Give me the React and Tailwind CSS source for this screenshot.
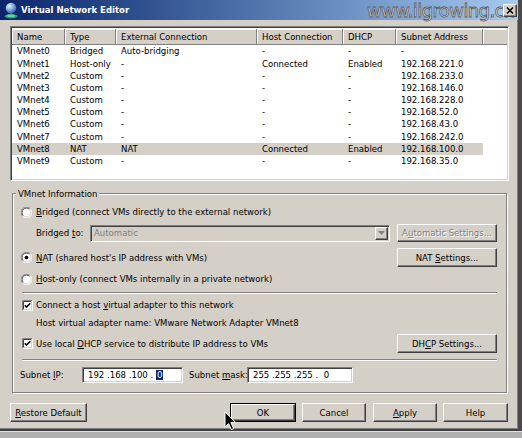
import React from "react";

const U = ({ children }) => <span className="underline underline-offset-[1px]">{children}</span>;

function Radio({ checked }) {
  return (
    <svg width="11" height="11" viewBox="0 0 12 12" className="shrink-0">
      <circle cx="6" cy="6" r="5.5" fill="#fff" />
      <path d="M10.2 1.8 A5.5 5.5 0 0 0 1.8 10.2" stroke="#808080" fill="none" />
      <path d="M9.4 2.6 A4.6 4.6 0 0 0 2.6 9.4" stroke="#404040" fill="none" />
      <path d="M1.8 10.2 A5.5 5.5 0 0 0 10.2 1.8" stroke="#ffffff" fill="none" />
      <path d="M2.6 9.4 A4.6 4.6 0 0 0 9.4 2.6" stroke="#d4d0c8" fill="none" />
      {checked && <circle cx="6" cy="6" r="2" fill="#000" />}
    </svg>
  );
}

function Check() {
  return (
    <svg width="11" height="11" viewBox="0 0 11 11" className="shrink-0">
      <rect x="0" y="0" width="11" height="11" fill="#fff" />
      <path d="M0.5 10.5V0.5H10.5" stroke="#808080" fill="none" />
      <path d="M1.5 9.5V1.5H9.5" stroke="#404040" fill="none" />
      <path d="M0.5 10.5H10.5V0.5" stroke="#ffffff" fill="none" />
      <path d="M1.5 9.5H9.5V1.5" stroke="#d4d0c8" fill="none" />
      <path d="M2.8 5.2 L4.5 7 L8.3 3.2" stroke="#000" strokeWidth="1.6" fill="none" />
    </svg>
  );
}

const raised =
  "border border-t-white border-l-white border-r-[#404040] border-b-[#404040] shadow-[inset_-1px_-1px_0_#808080,inset_1px_1px_0_#d4d0c8]";
const sunken =
  "border border-t-[#808080] border-l-[#808080] border-r-white border-b-white shadow-[inset_1px_1px_0_#404040,inset_-1px_-1px_0_#d4d0c8]";

function Btn({ w, h = 19, children, disabled, def }) {
  const inner = (
    <div
      className={`${raised} h-full w-full flex items-center justify-center bg-[#d4d0c8] ${
        disabled ? "text-[#808080] [text-shadow:1px_1px_0_#fff]" : "text-black"
      }`}
    >
      <span className="whitespace-pre">{children}</span>
    </div>
  );
  return (
    <div className={`shrink-0 ${def ? "border border-black" : ""}`} style={{ width: w, height: h }}>
      {inner}
    </div>
  );
}

const rows = [
  ["VMnet0", "Bridged", "Auto-bridging", "-", "-", "-"],
  ["VMnet1", "Host-only", "-", "Connected", "Enabled", "192.168.221.0"],
  ["VMnet2", "Custom", "-", "-", "-", "192.168.233.0"],
  ["VMnet3", "Custom", "-", "-", "-", "192.168.146.0"],
  ["VMnet4", "Custom", "-", "-", "-", "192.168.228.0"],
  ["VMnet5", "Custom", "-", "-", "-", "192.168.52.0"],
  ["VMnet6", "Custom", "-", "-", "-", "192.168.43.0"],
  ["VMnet7", "Custom", "-", "-", "-", "192.168.242.0"],
  ["VMnet8", "NAT", "NAT", "Connected", "Enabled", "192.168.100.0"],
  ["VMnet9", "Custom", "-", "-", "-", "192.168.35.0"],
];

const headers = ["Name", "Type", "External Connection", "Host Connection", "DHCP", "Subnet Address"];

function TitleIcon() {
  return (
    <svg width="16" height="17" viewBox="0 0 16 17" className="shrink-0">
      <defs>
        <radialGradient id="hg" cx="0.35" cy="0.3" r="0.8">
          <stop offset="0" stopColor="#e8f2ff" />
          <stop offset="0.5" stopColor="#7fa8e0" />
          <stop offset="1" stopColor="#2a4fa8" />
        </radialGradient>
      </defs>
      <rect x="7" y="9" width="2" height="4" fill="#2f6f8f" />
      <ellipse cx="8" cy="14.3" rx="6.5" ry="2.2" fill="#2aa07a" />
      <ellipse cx="8" cy="13.8" rx="4" ry="1.2" fill="#6fd0a8" />
      <circle cx="8" cy="6" r="5.3" fill="url(#hg)" />
    </svg>
  );
}

export default function App() {
  return (
    <div className="w-[522px] h-[438px] bg-[#a8a8a8] overflow-hidden relative font-['Tahoma','DejaVu_Sans_Condensed','Liberation_Sans',sans-serif] text-[9.5px] text-black leading-none">
      <div className="w-[522px] h-[431px] bg-[#d4d0c8] flex flex-col border-r-[4px] border-b-2 border-r-[#4a4a4a] border-b-[#404040] shadow-[inset_-1px_-1px_0_#808080]">
        {/* Title bar */}
        <div className="h-[20px] shrink-0 flex items-center bg-linear-to-r from-[#0a246a] to-[#a6caf0] pl-[3px] pr-[1px]">
          <TitleIcon />
          <span className="ml-[2px] text-white font-bold text-[9.5px]">Virtual Network Editor</span>
          <div className={`relative z-10 ml-auto w-[14px] h-[13px] ${raised} bg-[#d4d0c8] flex items-center justify-center`}>
            <svg width="8" height="7" viewBox="0 0 8 7">
              <path d="M1 0.5 L7 6.5 M7 0.5 L1 6.5" stroke="#000" strokeWidth="1.5" />
            </svg>
          </div>
        </div>

        {/* List view */}
        <div className={`mt-[6px] ml-[10px] w-[499px] h-[155px] shrink-0 bg-white ${sunken} p-[1px] overflow-hidden`}>
          <div className="flex h-[16px] bg-[#d4d0c8] mt-[1px]">
            {headers.map((h, i) => (
              <div
                key={h}
                className="h-full flex items-center pl-[5px] border-r border-b border-r-[#808080] border-b-[#808080] shadow-[inset_1px_1px_0_#fff] shrink-0"
                style={{ width: [53, 51, 141, 86, 53, 87][i] }}
              >
                {h}
              </div>
            ))}
            <div className="flex-1 h-full border-b border-b-[#808080] shadow-[inset_1px_1px_0_#fff]" />
          </div>
          <div className="flex flex-col">
            {rows.map((r) => (
              <div
                key={r[0]}
                className={`grid grid-cols-[53px_51px_141px_86px_53px_87px] w-[471px] h-[12.2px] items-center ${
                  r[0] === "VMnet8" ? "bg-[#d4d0c8]" : ""
                }`}
              >
                {r.map((c, j) => (
                  <div key={j} className="pl-[5px] whitespace-nowrap">
                    {c}
                  </div>
                ))}
              </div>
            ))}
          </div>
        </div>

        {/* Group box */}
        <div className="mt-[12px] ml-[12px] w-[495px] h-[200px] shrink-0 relative border border-[#808080] shadow-[inset_1px_1px_0_#fff,1px_1px_0_#fff] flex flex-col pl-[8px] pr-[9px]">
          <span className="absolute left-[3px] top-[-5px] bg-[#d4d0c8] px-[2px]">VMnet Information</span>

          <div className="mt-[10px] h-[16px] flex items-center gap-[4px]">
            <Radio />
            <span>
              <U>B</U>ridged (connect VMs directly to the external network)
            </span>
          </div>

          <div className="mt-[4px] h-[18px] flex items-center">
            <span className="ml-[15px] w-[54px] shrink-0 whitespace-nowrap">
              Bridged <U>t</U>o:
            </span>
            <div className={`w-[300px] h-[17px] ${sunken} bg-[#d4d0c8] flex items-center`}>
              <span className="pl-[3px] text-[#808080] flex-1">Automatic</span>
              <div className={`w-[13px] h-[13px] mr-[1px] ${raised} bg-[#d4d0c8] flex items-center justify-center`}>
                <svg width="7" height="4" viewBox="0 0 7 4">
                  <path d="M0 0H7L3.5 4Z" fill="#808080" />
                </svg>
              </div>
            </div>
            <div className="ml-[7px]">
              <Btn w={100} h={18} disabled>
                A<U>u</U>tomatic Settings...
              </Btn>
            </div>
          </div>

          <div className="mt-[6px] h-[19px] flex items-center">
            <Radio checked />
            <span className="ml-[4px] flex-1">
              <U>N</U>AT (shared host's IP address with VMs)
            </span>
            <Btn w={100}>
              NAT <U>S</U>ettings...
            </Btn>
          </div>

          <div className="mt-[4px] h-[16px] flex items-center gap-[4px]">
            <Radio />
            <span>
              <U>H</U>ost-only (connect VMs internally in a private network)
            </span>
          </div>

          <div className="mt-[5px] h-[2px] ml-[1px] border-t border-t-[#808080] border-b border-b-white" />

          <div className="mt-[3px] h-[16px] flex items-center pl-[1px] gap-[3px]">
            <Check />
            <span>
              Connect a host <U>v</U>irtual adapter to this network
            </span>
          </div>

          <div className="mt-[2px] h-[16px] flex items-center pl-[15px]">
            Host virtual adapter name: VMware Network Adapter VMnet8
          </div>

          <div className="mt-[3px] h-[19px] flex items-center pl-[1px]">
            <Check />
            <span className="ml-[3px] flex-1">
              Use local <U>D</U>HCP service to distribute IP address to VMs
            </span>
            <Btn w={100}>
              DH<U>C</U>P Settings...
            </Btn>
          </div>

          <div className="mt-[6px] h-[2px] ml-[1px] border-t border-t-[#808080] border-b border-b-white" />

          <div className="mt-[6px] h-[16px] flex items-center -ml-[1px]">
            <span className="w-[62px] shrink-0 whitespace-nowrap">
              Subnet <U>I</U>P:
            </span>
            <div className={`w-[101px] h-[16px] shrink-0 ${sunken} bg-white flex items-center pl-[5px] whitespace-pre`}>
              <span>192 .168 .100 . </span>
              <span className="bg-[#0a246a] text-white px-[1px]">0</span>
            </div>
            <span className="ml-[6px] w-[58px] shrink-0 whitespace-nowrap">
              Subnet <U>m</U>ask:
            </span>
            <div className={`w-[106px] h-[16px] shrink-0 ${sunken} bg-white flex items-center pl-[5px] whitespace-pre`}>
              <span>255 .255 .255 .  0</span>
            </div>
          </div>
        </div>

        {/* Bottom buttons */}
        <div className="mt-[10px] h-[19px] flex items-center pl-[10px] pr-[10px]">
          <Btn w={77}>
            <U>R</U>estore Default
          </Btn>
          <div className="ml-auto flex items-center">
            <Btn w={66} def>
              OK
            </Btn>
            <div className="ml-[6px]">
              <Btn w={64}>Cancel</Btn>
            </div>
            <div className="ml-[7px]">
              <Btn w={64}>
                <U>A</U>pply
              </Btn>
            </div>
            <div className="ml-[6px]">
              <Btn w={65}>Help</Btn>
            </div>
          </div>
        </div>
      </div>
      <div className="h-[7px] border-t border-t-[#e0e0e0] bg-[#b0b0b0]" />

      {/* Watermark */}
      <div className="absolute left-[367px] top-[0px] text-[18px] leading-[22px] font-['DejaVu_Sans',sans-serif] text-[#ececec] [-webkit-text-stroke:0.8px_#5a5a5a] tracking-[-0.6px] pointer-events-none">
        www.iigrowing.cn
      </div>

      {/* Mouse cursor */}
      <svg className="absolute left-[224px] top-[411px]" width="14" height="20" viewBox="0 0 14 20">
        <path d="M1 1 L1 16 L4.6 12.6 L7.4 18.6 L9.6 17.6 L6.9 11.6 L11.8 11.6 Z" fill="#000" stroke="#fff" strokeWidth="1" />
      </svg>
    </div>
  );
}
